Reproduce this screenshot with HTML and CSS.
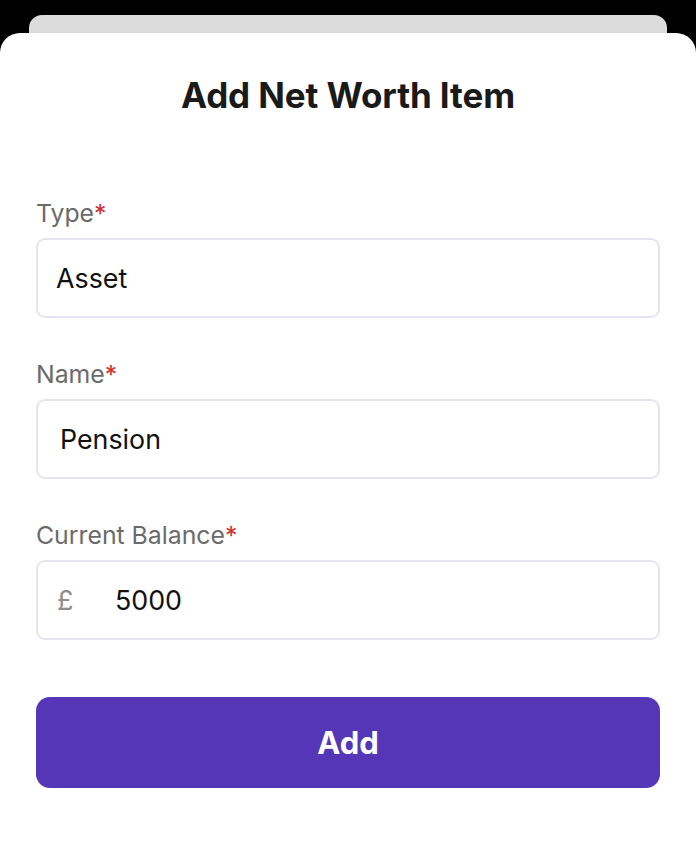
FILE: index.html
```html
<!DOCTYPE html>
<html lang="en">
<head>
<meta charset="utf-8">
<title>Add Net Worth Item</title>
<link rel="stylesheet" href="styles.css">
</head>
<body>
<div class="screen">
  <div class="back-card"></div>
  <div class="sheet">
    <h1 class="title">Add Net Worth Item</h1>
    <div class="form">
      <div class="field">
        <div class="label">Type<span class="req">*</span></div>
        <div class="input input-select">Asset</div>
      </div>
      <div class="field">
        <div class="label">Name<span class="req">*</span></div>
        <div class="input input-text">Pension</div>
      </div>
      <div class="field">
        <div class="label">Current Balance<span class="req">*</span></div>
        <div class="input input-money"><span class="currency">£</span><span class="amount">5000</span></div>
      </div>
    </div>
    <button class="btn-add" type="button">Add</button>
  </div>
</div>
</body>
</html>
```
FILE: styles.css
```css
html, body {
  margin: 0;
  padding: 0;
  background: #000;
}
body {
  font-family: Inter, "Liberation Sans", sans-serif;
  width: 696px;
  height: 854px;
  overflow: hidden;
}
.screen {
  display: flex;
  flex-direction: column;
  height: 854px;
  padding-top: 15px;
  box-sizing: border-box;
}
.back-card {
  height: 18px;
  margin: 0 29px 0 29px;
  background: #dcdcdc;
  border-radius: 13px 13px 0 0;
  flex: none;
}
.sheet {
  flex: 1;
  background: #fff;
  border-radius: 20px 20px 0 0;
  padding: 40px 36px 0 36px;
  display: flex;
  flex-direction: column;
}
.title {
  margin: 0;
  font-size: 35px;
  line-height: 44px;
  font-weight: 700;
  color: #1a1a1a;
  text-align: center;
  letter-spacing: -0.1px;
}
.form {
  margin-top: 81px;
  display: flex;
  flex-direction: column;
  gap: 41px;
}
.field {
  display: flex;
  flex-direction: column;
  gap: 10px;
}
.label {
  font-size: 24.8px;
  line-height: 30px;
  color: #6b6b6b;
}
.req {
  color: #d0312d;
}
.input {
  height: 80px;
  box-sizing: border-box;
  border: 2px solid #e4e4f0;
  border-radius: 9px;
  display: flex;
  align-items: center;
  font-size: 26.8px;
  color: #111;
}
.input-select {
  padding-left: 18px;
}
.input-text {
  padding-left: 22px;
}
.input-money {
  padding-left: 19px;
}
.currency {
  color: #8e8e8e;
  width: 58px;
}
.btn-add {
  margin-top: 57px;
  height: 91px;
  border: none;
  border-radius: 14px;
  background: #5436b7;
  color: #fff;
  font-family: Inter, "Liberation Sans", sans-serif;
  font-size: 31px;
  font-weight: 700;
  padding: 0;
}
```
